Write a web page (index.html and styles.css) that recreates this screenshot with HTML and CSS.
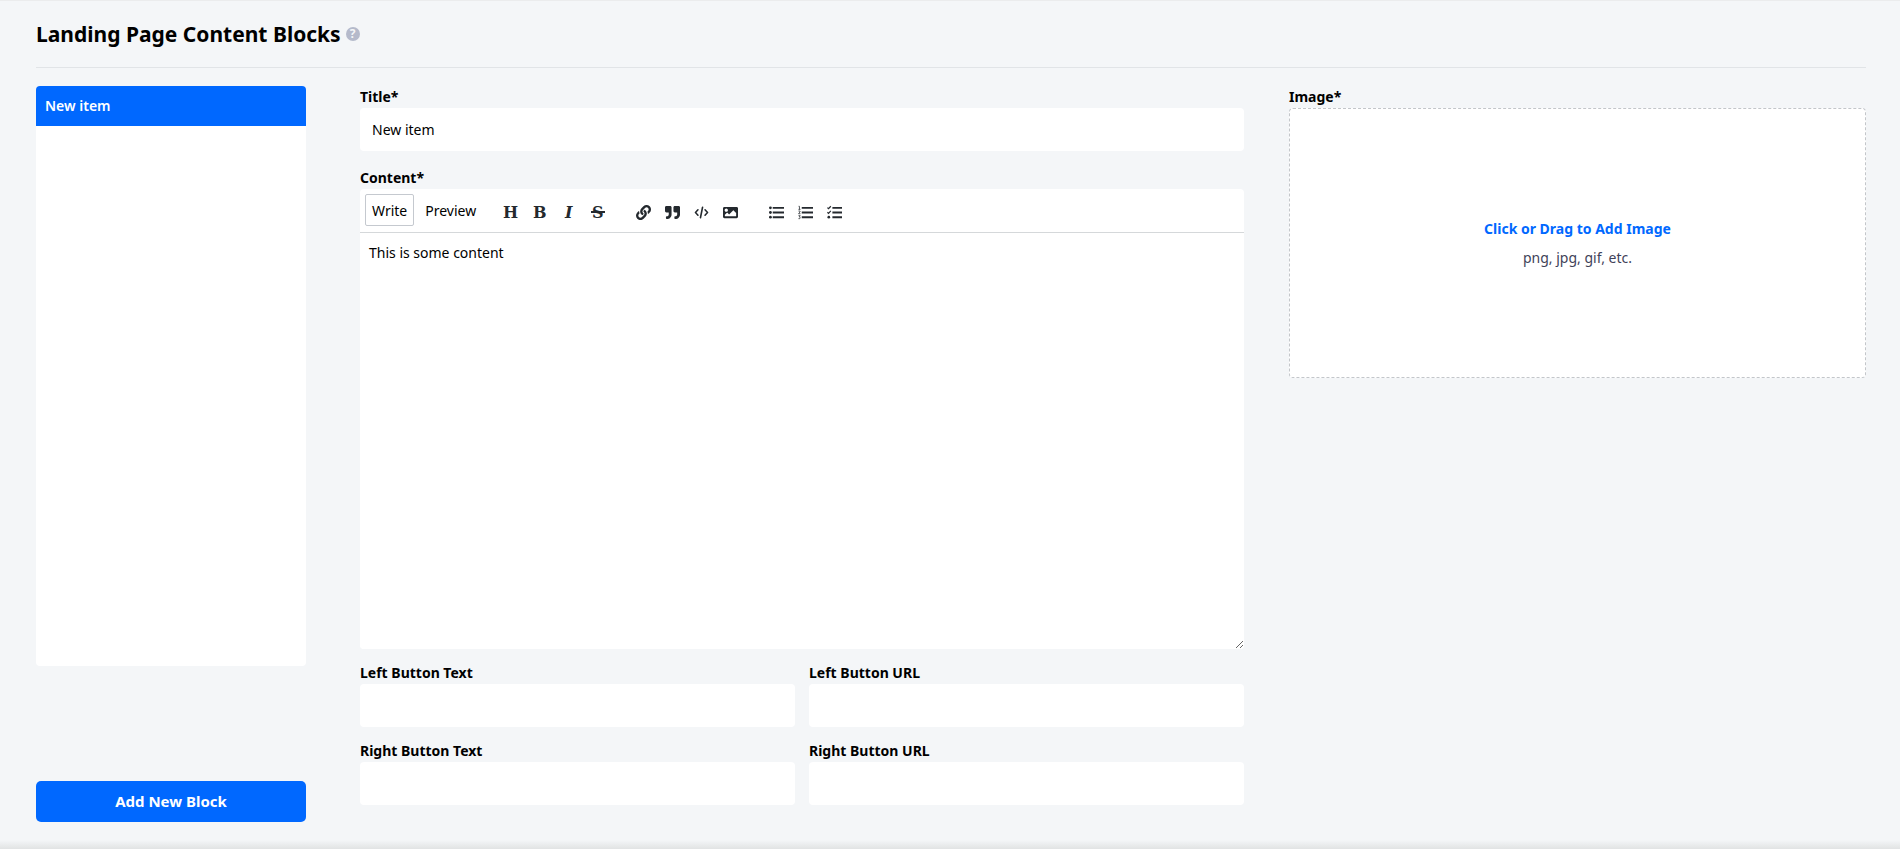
FILE: index.html
```
<!DOCTYPE html>
<html lang="en">

<head>
    <meta charset="UTF-8">
    <meta name="viewport" content="width=device-width, initial-scale=1.0">
    <title>Landing Page Content Blocks</title>
    <link rel="stylesheet" href="styles.css">
</head>

<body>
    <main class="page">
        <header class="page-header">
            <h1>Landing Page Content Blocks</h1>
            <button type="button" class="help" aria-label="Help">?</button>
        </header>

        <form class="columns">
            <aside class="sidebar">
                <ul class="block-list">
                    <li><a href="#" class="active">New item</a></li>
                </ul>
                <button type="button" class="add-button">Add New Block</button>
            </aside>

            <section class="fields">
                <div class="field title-field">
                    <label for="title">Title*</label>
                    <input id="title" type="text" value="New item">
                </div>

                <div class="field">
                    <label for="content">Content*</label>
                    <div class="editor">
                        <div class="toolbar">
                            <div class="tabs">
                                <button type="button" class="tab selected">Write</button>
                                <button type="button" class="tab">Preview</button>
                            </div>
                            <div class="tools">
                                <button type="button" class="letter" title="Heading">H</button>
                                <button type="button" class="letter" title="Bold">B</button>
                                <button type="button" class="letter italic" title="Italic">I</button>
                                <button type="button" class="letter strike" title="Strikethrough">S</button>
                            </div>
                            <div class="tools">
                                <button type="button" title="Link">
                                    <svg viewBox="0 0 512 512"><path d="M326.612 185.391c59.747 59.809 58.927 155.698.36 214.59-.11.12-.24.25-.36.37l-67.2 67.2c-59.27 59.27-155.699 59.262-214.96 0-59.27-59.26-59.27-155.7 0-214.96l37.106-37.106c9.84-9.84 26.786-3.3 27.294 10.606.648 17.722 3.826 35.527 9.69 52.721 1.986 5.822.567 12.262-3.783 16.612l-13.087 13.087c-28.026 28.026-28.905 73.66-1.155 101.96 28.024 28.579 74.086 28.749 102.325.51l67.2-67.19c28.191-28.191 28.073-73.757 0-101.83-3.701-3.694-7.429-6.564-10.341-8.569a16.037 16.037 0 0 1-6.947-12.606c-.396-10.567 3.348-21.456 11.698-29.806l21.054-21.055c5.521-5.521 14.182-6.199 20.584-1.731a152.482 152.482 0 0 1 20.522 17.197zM467.547 44.449c-59.261-59.262-155.69-59.27-214.96 0l-67.2 67.2c-.12.12-.25.25-.36.37-58.566 58.892-59.387 154.781.36 214.59a152.454 152.454 0 0 0 20.521 17.196c6.402 4.468 15.064 3.789 20.584-1.731l21.054-21.055c8.35-8.35 12.094-19.239 11.698-29.806a16.037 16.037 0 0 0-6.947-12.606c-2.912-2.005-6.64-4.875-10.341-8.569-28.073-28.073-28.191-73.639 0-101.83l67.2-67.19c28.239-28.239 74.3-28.069 102.325.51 27.75 28.3 26.872 73.934-1.155 101.96l-13.087 13.087c-4.35 4.35-5.769 10.79-3.783 16.612 5.864 17.194 9.042 34.999 9.69 52.721.509 13.906 17.454 20.446 27.294 10.606l37.106-37.106c59.271-59.259 59.271-155.699.001-214.959z"/></svg>
                                </button>
                                <button type="button" title="Quote">
                                    <svg viewBox="0 0 512 512"><path d="M464 32H336c-26.5 0-48 21.5-48 48v128c0 26.5 21.5 48 48 48h80v64c0 35.3-28.7 64-64 64h-8c-13.3 0-24 10.7-24 24v48c0 13.3 10.7 24 24 24h8c88.4 0 160-71.6 160-160V80c0-26.5-21.5-48-48-48zm-288 0H48C21.5 32 0 53.5 0 80v128c0 26.5 21.5 48 48 48h80v64c0 35.3-28.7 64-64 64h-8c-13.3 0-24 10.7-24 24v48c0 13.3 10.7 24 24 24h8c88.4 0 160-71.6 160-160V80c0-26.5-21.5-48-48-48z"/></svg>
                                </button>
                                <button type="button" title="Code">
                                    <svg class="lines" viewBox="0 0 512 512"><path d="M135 165L50 256l85 91M377 165l85 91-85 91M292 76l-72 360"/></svg>
                                </button>
                                <button type="button" title="Image">
                                    <svg viewBox="0 0 512 512"><path d="M464 448H48c-26.51 0-48-21.49-48-48V112c0-26.51 21.49-48 48-48h416c26.51 0 48 21.49 48 48v288c0 26.51-21.49 48-48 48zM112 120c-30.928 0-56 25.072-56 56s25.072 56 56 56 56-25.072 56-56-25.072-56-56-56zM64 384h384V272l-87.515-87.515c-4.686-4.686-12.284-4.686-16.971 0L208 320l-55.515-55.515c-4.686-4.686-12.284-4.686-16.971 0L64 336v48z"/></svg>
                                </button>
                            </div>
                            <div class="tools">
                                <button type="button" title="Unordered list">
                                    <svg viewBox="0 0 512 512"><circle cx="48" cy="96" r="48"/><circle cx="48" cy="256" r="48"/><circle cx="48" cy="416" r="48"/><path d="M128 64h384v64H128zM128 224h384v64H128zM128 384h384v64H128z"/></svg>
                                </button>
                                <button type="button" title="Ordered list">
                                    <svg viewBox="0 0 512 512"><path d="M128 64h384v64H128zM128 224h384v64H128zM128 384h384v64H128z"/><path class="thin" d="M20 44h30v104M16 150h68M16 206h54v28L20 298h64M16 364h60l-30 44q34 4 30 34-6 40-60 24"/></svg>
                                </button>
                                <button type="button" title="Task list">
                                    <svg viewBox="0 0 512 512"><path d="M184 64h328v64H184zM184 224h328v64H184zM184 384h328v64H184z"/><circle cx="62" cy="416" r="46"/><path class="check" d="M14 88l38 38 78-84M14 248l38 38 78-84"/></svg>
                                </button>
                            </div>
                        </div>
                        <textarea id="content">This is some content</textarea>
                    </div>
                </div>

                <div class="field-grid">
                    <div class="field">
                        <label for="left-text">Left Button Text</label>
                        <input id="left-text" type="text">
                    </div>
                    <div class="field">
                        <label for="left-url">Left Button URL</label>
                        <input id="left-url" type="text">
                    </div>
                    <div class="field">
                        <label for="right-text">Right Button Text</label>
                        <input id="right-text" type="text">
                    </div>
                    <div class="field">
                        <label for="right-url">Right Button URL</label>
                        <input id="right-url" type="text">
                    </div>
                </div>
            </section>

            <section class="field image-field">
                <label for="image">Image*</label>
                <button type="button" id="image" class="dropzone">
                    <strong>Click or Drag to Add Image</strong>
                    <span>png, jpg, gif, etc.</span>
                </button>
            </section>
        </form>
    </main>
</body>

</html>
```
FILE: styles.css
```
* {
    box-sizing: border-box;
}

body {
    margin: 0;
    background: #f4f6f8;
    color: #000;
    font-family: "Noto Sans", "Open Sans", sans-serif;
    font-size: 14px;
}

button,
input,
textarea {
    margin: 0;
    border: 0;
    color: inherit;
    font: inherit;
}

button {
    padding: 0;
    background: none;
    cursor: pointer;
}

.page {
    min-height: 100vh;
    padding: 0 34px 27px 36px;
    border-top: 1px solid #ebeced;
    background: linear-gradient(to top, #e1e3e3, #f4f6f8 9px);
}

.page-header {
    display: flex;
    align-items: center;
    gap: 5px;
    height: 67px;
    margin-bottom: 18px;
    border-bottom: 1px solid #e1e4e7;
}

h1 {
    margin: 0;
    font-size: 21px;
    line-height: 28px;
}

.help {
    width: 14px;
    height: 14px;
    border-radius: 50%;
    background: #b5bacb;
    color: #f4f6f8;
    font-size: 12px;
    font-weight: bold;
    line-height: 14px;
}

.columns {
    display: grid;
    grid-template-columns: 270px minmax(0, 893fr) minmax(0, 577fr);
    gap: 45px;
}

.sidebar {
    display: flex;
    flex-direction: column;
    justify-content: space-between;
}

.block-list {
    height: 580px;
    margin: 0;
    padding: 0;
    overflow: hidden;
    border-radius: 4px;
    background: #fff;
    list-style: none;
}

.block-list a {
    display: block;
    padding: 0 9px;
    font-weight: 600;
    line-height: 40px;
    text-decoration: none;
}

.block-list .active {
    background: #0068ff;
    color: #fff;
}

.add-button {
    height: 41px;
    padding-bottom: 2px;
    border-radius: 5px;
    background: #0068ff;
    color: #fff;
    font-size: 15px;
    font-weight: bold;
}

.fields {
    padding: 0 0 17px 9px;
}

.field label {
    display: block;
    font-weight: bold;
    line-height: 22px;
}

.field input {
    display: block;
    width: 100%;
    height: 43px;
    padding: 0 12px;
    border-radius: 4px;
    background: #fff;
}

.title-field {
    margin-bottom: 16px;
}

.field-grid {
    display: grid;
    grid-template-columns: 1fr 1fr;
    gap: 13px 14px;
    margin-top: 13px;
}

.editor {
    overflow: hidden;
    border-radius: 4px;
    background: #fff;
}

.toolbar {
    display: flex;
    align-items: center;
    height: 44px;
    padding: 0 5px 1px;
    border-bottom: 1px solid #d5d8da;
}

.tabs {
    display: flex;
    margin-right: 13px;
}

.tab {
    height: 32px;
    padding: 0 6px;
    border: 1px solid transparent;
    border-radius: 2px;
}

.tab + .tab {
    margin-left: 4px;
}

.tab.selected {
    border-color: #c5c9cf;
}

.tools {
    display: flex;
    margin-right: 17px;
}

.tools button {
    display: flex;
    align-items: center;
    justify-content: center;
    width: 29px;
    height: 32px;
    padding-top: 4px;
    color: #24292e;
}

.tools .letter {
    font-family: "DejaVu Serif", serif;
    font-size: 16px;
    font-weight: bold;
}

.tools .italic {
    font-style: italic;
}

/* the bar runs a little past the letter on both sides */
.tools .strike {
    position: relative;
}

.strike::after {
    content: "";
    position: absolute;
    top: 17px;
    left: 8px;
    width: 14px;
    height: 2px;
    background: currentColor;
}

.tools svg {
    width: 15px;
    height: 15px;
    fill: currentColor;
}

.tools .lines {
    fill: none;
    stroke: currentColor;
    stroke-width: 54;
    stroke-linecap: round;
    stroke-linejoin: round;
}

.thin,
.check {
    fill: none;
    stroke: currentColor;
    stroke-width: 26;
}

.check {
    stroke-width: 40;
}

textarea {
    display: block;
    width: 100%;
    height: 416px;
    padding: 10px 9px;
    background: #fff;
    line-height: 20px;
    resize: vertical;
}

.dropzone {
    display: flex;
    flex-direction: column;
    align-items: center;
    justify-content: center;
    gap: 9px;
    width: 100%;
    height: 270px;
    border: 1px dashed #c3c6ca;
    border-radius: 4px;
    background: #fff;
    color: #3f4259;
    line-height: 20px;
}

.dropzone strong {
    color: #0068ff;
}
```
